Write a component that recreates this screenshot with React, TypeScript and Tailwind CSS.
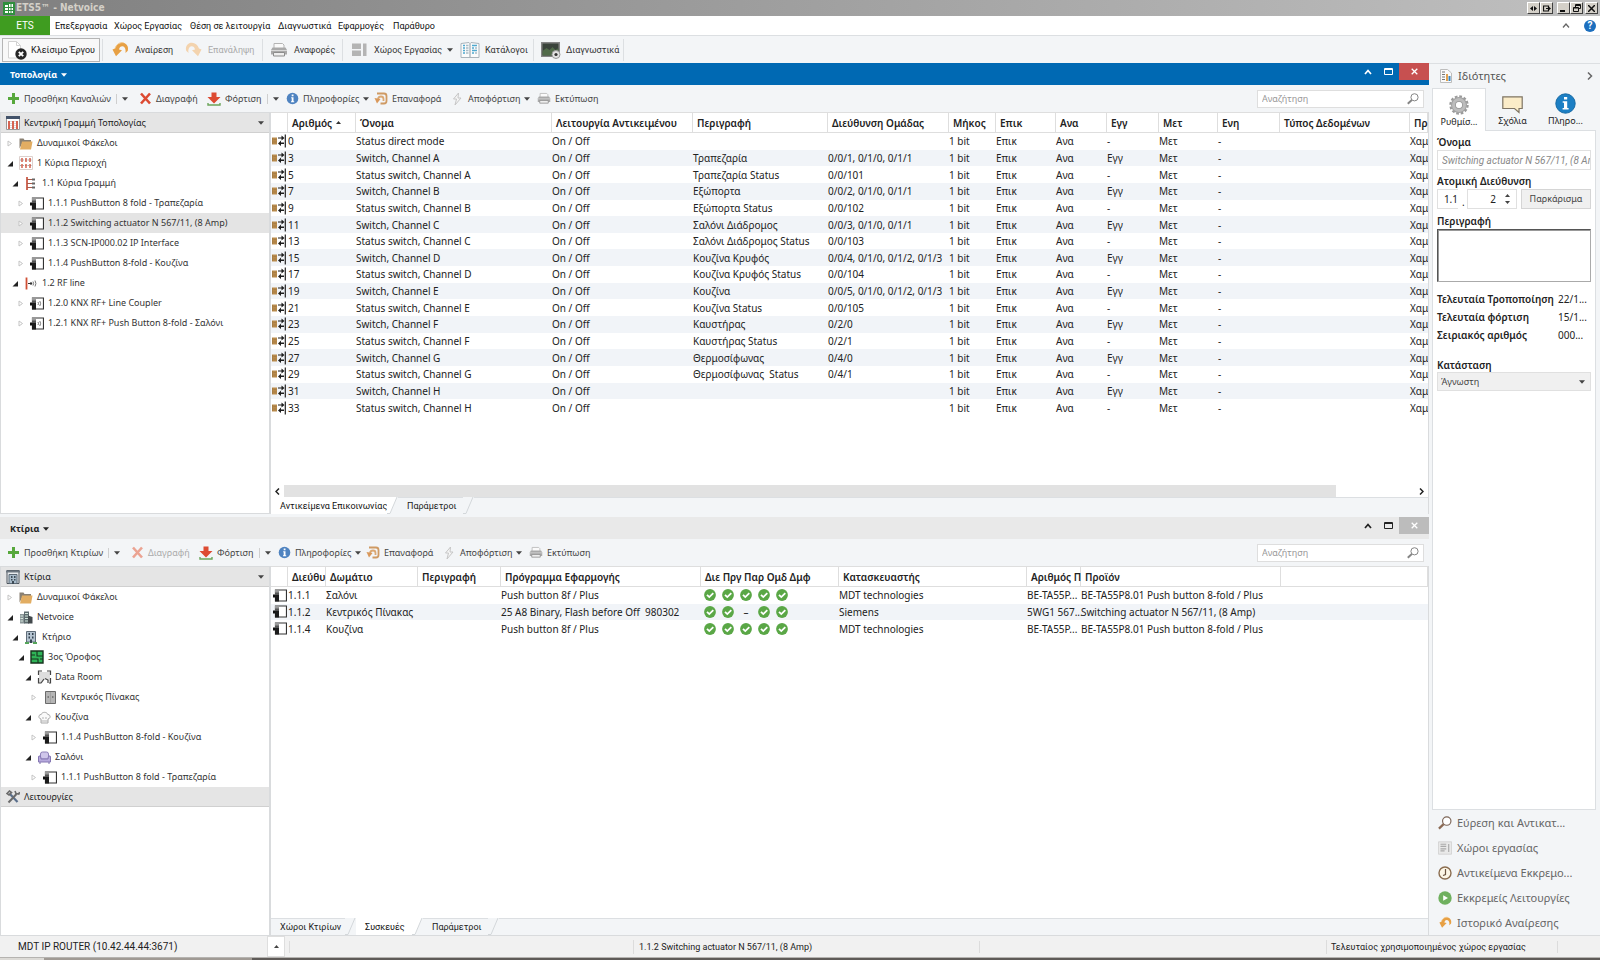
import React, { ReactNode } from "react";

/* ---------- icons ---------- */

type IconProps = { faded?: boolean };

const Down = ({ className = "text-[#444]" }: { className?: string }) => (
  <svg className={`shrink-0 ${className}`} width="6" height="4" viewBox="0 0 7 4" aria-hidden="true">
    <path d="M0 0h7L3.5 4z" fill="currentColor" />
  </svg>
);

const PlusIcon = () => (
  <svg width="13" height="13" viewBox="0 0 13 13" aria-hidden="true">
    <path d="M5 1h3v4h4v3H8v4H5V8H1V5h4z" fill="#57a83c" />
  </svg>
);

const CrossIcon = ({ faded }: IconProps) => (
  <svg width="13" height="13" viewBox="0 0 13 13" aria-hidden="true">
    <path d="M2 1.500l9 10M11 1.500l-9 10" stroke={faded ? "#eba392" : "#dc4a32"} strokeWidth="2.600" />
  </svg>
);

const DownloadIcon = () => (
  <svg width="14" height="14" viewBox="0 0 14 14" aria-hidden="true">
    <path d="M4.500 0.500h5v4.500h4L7 11.500 .5 5h4z" fill="#dd4b32" />
    <path d="M1 11v2h12v-2" fill="none" stroke="#6ba55a" strokeWidth="1.400" />
  </svg>
);

const InfoIcon = () => (
  <svg width="13" height="13" viewBox="0 0 13 13" aria-hidden="true">
    <circle cx="6.500" cy="6.500" r="5.800" fill="#4f83c0" />
    <path d="M5.700 2.500h1.800v1.700H5.700zM5.200 5.200h2.300v4h.7v1H5v-1h.7v-3h-.5z" fill="#fff" />
  </svg>
);

const RestoreIcon = () => (
  <svg width="14" height="13" viewBox="0 0 14 13" aria-hidden="true">
    <path d="M3 1.500h7q2.500 0 2.500 2.500v5q0 2.500-2.500 2.500H6.500" fill="none" stroke="#cf9a63" strokeWidth="1.800" />
    <path d="M9.500 9V7Q9.500 4.500 7 4.500 4.500 4.500 4 7" fill="none" stroke="#dba873" strokeWidth="1.800" />
    <path d="M.5 6l6 1L3 11.500z" fill="#d9985a" />
  </svg>
);

const BoltIcon = () => (
  <svg width="11" height="14" viewBox="0 0 11 14" aria-hidden="true">
    <path d="M6.500 1L1.500 7h3L3 13l6-7H6z" fill="#f5f5f5" stroke="#c6c6c6" strokeWidth="1" />
  </svg>
);

const PrinterIcon = ({ big }: { big?: boolean }) => (
  <svg width={big ? 18 : 14} height={big ? 16 : 13} viewBox="0 0 18 16" aria-hidden="true">
    <path d="M4 6V1.500h8.500L14 3v3" fill="#fafafa" stroke="#b4b4b4" />
    <path d="M2.500 5.500h13L17 8v4.500H1V8z" fill="#a9a9a9" />
    <path d="M1 8.500h16" stroke="#d8d8d8" />
    <path d="M3.500 10.500h11v3.500h-11z" fill="#eee" stroke="#8c8c8c" />
  </svg>
);

const CloseProjectIcon = () => (
  <svg width="20" height="20" viewBox="0 0 20 20" className="shrink-0" aria-hidden="true">
    <path d="M1.500 1.500h8l4 4V18h-12z" fill="#fff" stroke="#d2d2d2" />
    <path d="M9.500 1.500v4h4" fill="none" stroke="#d2d2d2" />
    <circle cx="14" cy="14" r="5.700" fill="#272727" />
    <path d="M11.800 11.800l4.400 4.400M16.200 11.800l-4.400 4.400" stroke="#fff" strokeWidth="1.900" />
  </svg>
);

const UndoIcon = ({ small }: { small?: boolean }) => (
  <svg width={small ? 13 : 17} height={small ? 13 : 17} viewBox="0 0 17 17" aria-hidden="true">
    <path
      d="M0.500 8.500L3 7.500C4.500 3 8 1 11.500 1.800 15 2.800 16.800 6 15.800 9.800L13.500 12c.6-4-.8-6.500-3-6.700-1.800-.1-3 1-3.500 3.200l3 .8-6 6z"
      fill="#e7a044"
    />
    <path d="M3 7.500C4.500 3 8 1 11.500 1.800" fill="none" stroke="#f3c889" />
  </svg>
);

const RedoIcon = () => (
  <svg width="17" height="17" viewBox="0 0 17 17" aria-hidden="true">
    <path
      d="M16.500 8.500L14 7.500C12.500 3 9 1 5.500 1.800 2 2.800.2 6 1.200 9.800L3.500 12c-.6-4 .8-6.500 3-6.700 1.800-.1 3 1 3.500 3.200l-3 .8 6 6z"
      fill="#f3d3ae"
    />
  </svg>
);

const WorkspaceIcon = ({ small }: { small?: boolean }) => (
  <svg width={small ? 14 : 17} height={small ? 14 : 16} viewBox="0 0 17 16" aria-hidden="true">
    {small && <path d="M.5 .5h16v15H.5z" fill="#e9e9e9" stroke="#cfcfcf" />}
    {small ? (
      <path d="M3 3.500h7M3 6h7M3 9h7M3 11.500h5M13 3v10" stroke="#a9a9a9" strokeWidth="1.400" />
    ) : (
      <path d="M1 1.500h9v5.500H1zM1 8.500h9V14H1zM12 1.500h3.500V14H12z" fill="#b4b4b4" />
    )}
  </svg>
);

const BookIcon = () => (
  <svg width="20" height="18" viewBox="0 0 20 18" aria-hidden="true">
    <path d="M1 2.500L9 1.500l1 1 1-1 8 1V16.500H1z" fill="#fbfbfb" stroke="#aab4bb" />
    <path d="M10 2.500V16" stroke="#8f9ba3" />
    <path d="M3 4.500h2M3 7h2M3 9.500h2M3 12h2M12 4.500h5M12 7h2M12 9.500h5M12 12h2" stroke="#4fa9cf" strokeWidth="1.300" />
    <path d="M6 4.500h2.500M6 7h2.500M6 9.500h2.500M6 12h2.500M15 7h2M15 12h2" stroke="#a9bcc6" strokeWidth="1.300" />
  </svg>
);

const DiagnosticsIcon = () => (
  <svg width="20" height="18" viewBox="0 0 20 18" aria-hidden="true">
    <path d="M0 1h19v15H0z" fill="#858585" />
    <path d="M1.500 2.500h16v12h-16z" fill="#3a433b" />
    <path d="M1.500 10l4-3 3 2 3-3 3 3 3-2v7.500h-16z" fill="#516b4a" />
    <circle cx="15" cy="13.500" r="4" fill="#e3e3e3" stroke="#999" />
    <circle cx="15" cy="13.500" r="1.600" fill="#333" />
  </svg>
);

const FolderIcon = () => (
  <svg width="14" height="13" viewBox="0 0 14 13" aria-hidden="true">
    <path d="M0.500 11.500V1.500h4l1 1.500h6.500v2H4z" fill="#8a8072" />
    <path d="M3 4.500h10.500l-1.500 8H1z" fill="#e2ad62" />
  </svg>
);

const AreaIcon = () => (
  <svg width="14" height="14" viewBox="0 0 14 14" aria-hidden="true">
    <path d="M.5 .5h13v13H.5z" fill="#fff" stroke="#dcd0cd" />
    <path d="M1 4h12M1 9.500h12" stroke="#aaa" strokeDasharray="1.500 1" />
    <path d="M3 2v10M7 2v10M11 2v10" stroke="#cf4a35" strokeWidth="1.300" strokeDasharray="4 2" />
  </svg>
);

const BackboneIcon = () => (
  <svg width="14" height="14" viewBox="0 0 14 14" aria-hidden="true">
    <path d="M.5 .5h13v13H.5z" fill="#fff" stroke="#999" />
    <path d="M0 0h14v3H0z" fill="#43536a" />
    <path d="M3 5v8M7 5v8M11 5v8" stroke="#cf4a35" strokeWidth="1.700" />
    <path d="M5 5v8M9 5v8" stroke="#b7b7b7" strokeDasharray="1 1" />
  </svg>
);

const LineIcon = () => (
  <svg width="12" height="13" viewBox="0 0 12 13" aria-hidden="true">
    <path d="M2 0v13" stroke="#c6452f" strokeWidth="1.600" />
    <path d="M2 2.500h5M2 6.500h5M2 10.500h5" stroke="#a85a4a" />
    <path d="M7 1.500h3v2H7zM7 5.500h3v2H7zM7 9.500h3v2H7z" fill="#666" />
  </svg>
);

const RfLineIcon = () => (
  <svg width="12" height="13" viewBox="0 0 12 13" aria-hidden="true">
    <path d="M1.500 0.500v12" stroke="#d05035" strokeWidth="1.800" />
    <path d="M3 6.500h3" stroke="#333" />
    <circle cx="6" cy="6.500" r="1.200" fill="#333" />
    <path d="M8 4.500q1.200 2 0 4M10 3.500q1.800 3 0 6" fill="none" stroke="#777" />
  </svg>
);

const DeviceIcon = ({ rf }: { rf?: boolean }) => (
  <svg width="14" height="13" viewBox="0 0 14 13" aria-hidden="true">
    <path d="M2.500 1h11v11h-11z" fill="#fff" stroke="#333" strokeWidth="1.200" />
    <path d="M2 .5h4v4H2z" fill="#999" />
    <path d="M2 3.500h4v3H2z" fill="#555" />
    <path d="M2 6h4v6.500H2z" fill="#1b1b1b" />
    <path d="M0 5.500h2v3H0z" fill="#111" />
    {rf && <path d="M8 5q1 1.500 0 3M9.800 4q1.600 2.500 0 5" fill="none" stroke="#777" />}
  </svg>
);

const BuildingsIcon = () => (
  <svg width="14" height="14" viewBox="0 0 14 14" aria-hidden="true">
    <path d="M1 .5h12v13H1z" fill="#e8ebee" stroke="#4c545c" />
    <path d="M0 1.500h14" stroke="#6c7680" strokeWidth="2" />
    <path d="M3 4.500h8v9H3z" fill="#a9bccb" stroke="#5d6a76" />
    <path d="M5 6h1.500v2H5zM8 6h1.500v2H8zM5 9h1.500v1.500H5zM8 9h1.500v1.500H8zM6 11h2v3H6z" fill="#3d4a55" />
  </svg>
);

const ProjectIcon = () => (
  <svg width="14" height="13" viewBox="0 0 14 13" aria-hidden="true">
    <path d="M1 3h5v9.500H1z" fill="#8b9698" />
    <path d="M5 .5h5v12H5z" fill="#5d6b6e" />
    <path d="M9 4.500l4.500 1.500v6.500H9z" fill="#42494c" />
    <path d="M6 2.500h3M6 5h3M6 7.500h3M6 10h3M1.500 5h2.500M1.500 7.500h2.500M1.500 10h2.500" stroke="#d3e6dc" />
  </svg>
);

const HouseIcon = () => (
  <svg width="12" height="14" viewBox="0 0 12 14" aria-hidden="true">
    <path d="M1.500 1.500h9V12h-9z" fill="#b4c3d0" stroke="#5f6c78" />
    <path d="M3.500 3h1.500v2H3.500zM7 3h1.500v2H7zM3.500 6.500h1.500v2H3.500zM7 6.500h1.500v2H7zM5 9.500h2V13H5z" fill="#344350" />
    <path d="M0 13h4M8 13h4" stroke="#55a55a" strokeWidth="2" />
  </svg>
);

const FloorIcon = () => (
  <svg width="14" height="14" viewBox="0 0 14 14" aria-hidden="true">
    <path d="M1 1h12v12H1z" fill="#2fb457" stroke="#17331e" strokeWidth="1.400" />
    <path d="M1 5h4M7 1v5h6M1 9h7v4M10 9h3" fill="none" stroke="#17331e" strokeWidth="1.100" />
  </svg>
);

const RoomIcon = () => (
  <svg width="15" height="14" viewBox="0 0 15 14" aria-hidden="true">
    <path d="M2 2h11v10l-5-3-3 4H2z" fill="#dedede" />
    <path d="M5 1H1.500v4M1.500 8v5H4l3-4M10 1h3.500v4M13.500 8v5H12M8 8.500l3 1.500v3" fill="none" stroke="#444" strokeWidth="1.200" />
  </svg>
);

const CabinetIcon = () => (
  <svg width="11" height="13" viewBox="0 0 11 13" aria-hidden="true">
    <path d="M.5 .5h10v12H.5z" fill="#b5b5b5" stroke="#6b6b6b" />
    <path d="M5.500 1v11" stroke="#a2a2a2" />
    <path d="M2.500 6h1.500M7 6h1.500" stroke="#444" />
  </svg>
);

const KitchenIcon = () => (
  <svg width="13" height="13" viewBox="0 0 13 13" aria-hidden="true">
    <path d="M3 12V8C0 7.500.3 3.300 3.200 3.500 4 .6 9 .6 9.800 3.500 12.700 3.300 13 7.500 10 8v4z" fill="#fafafa" stroke="#a8a8a8" />
    <path d="M3 10h7M5 6v2M8 6v2" stroke="#b5b5b5" />
  </svg>
);

const SofaIcon = () => (
  <svg width="13" height="13" viewBox="0 0 13 13" aria-hidden="true">
    <path d="M2.500 8V3q0-2 2-2h4q2 0 2 2v5z" fill="#cfc6ea" stroke="#8d80b8" />
    <path d="M.5 6q0-1.500 1.500-1 1 .3 1 3h7q0-2.700 1-3 1.500-.5 1.500 1v5H.5z" fill="#b7aadd" stroke="#8577b3" />
    <path d="M2 11v2M11 11v2" stroke="#7b6eaa" />
  </svg>
);

const ToolsIcon = () => (
  <svg width="14" height="14" viewBox="0 0 14 14" aria-hidden="true">
    <path d="M3.500 3.500l8 8.500" stroke="#5a6f8c" strokeWidth="2.200" />
    <path d="M10.500 4l-8 8.500" stroke="#6a6a6a" strokeWidth="2" />
    <path d="M1 3.500l2.500-2.500 2 1.500L3 5zM9 1l1 2.500 2.800.5.800-2" fill="none" stroke="#6a6a6a" strokeWidth="1.600" />
  </svg>
);

const ObjectIcon = () => (
  <svg width="15" height="14" viewBox="0 0 15 14" aria-hidden="true">
    <path d="M1 3.500h5v7H1z" fill="#b98a4b" />
    <path d="M1.500 4v6M2.500 5.500h3M2.500 8h3" stroke="#a17a42" strokeWidth=".8" />
    <path d="M7 3.500h3.500v-2l3 2.500-3 2.500v-2H7zM13 8.500H10v-2L7 9.500l3 2.500v-2h3z" fill="#1d1d1d" />
    <path d="M14.300 .5v13" stroke="#222" strokeWidth="1.200" />
  </svg>
);

const CheckIcon = () => (
  <svg width="12" height="12" viewBox="0 0 12 12" role="img" aria-label="OK">
    <circle cx="6" cy="6" r="5.900" fill="#5aa746" />
    <path d="M3 5.800l2.300 2.300L9.300 4.200" fill="none" stroke="#fff" strokeWidth="1.800" />
  </svg>
);

const SearchIcon = ({ brown }: { brown?: boolean }) => (
  <svg width={brown ? 14 : 12} height={brown ? 14 : 12} viewBox="0 0 12 12" className="shrink-0" aria-hidden="true">
    <circle cx="7.500" cy="4.300" r="3.600" fill="#fff" stroke={brown ? "#7c6557" : "#858585"} />
    <path d="M4.800 7L.8 10.800" stroke={brown ? "#8b6a54" : "#858585"} strokeWidth="1.900" />
  </svg>
);

const GearIcon = () => (
  <svg width="20" height="20" viewBox="0 0 20 20" aria-hidden="true">
    <circle cx="10" cy="10" r="8.600" fill="none" stroke="#9a9a9a" strokeWidth="2.200" strokeDasharray="2.700 1.803" />
    <circle cx="10" cy="10" r="5.500" fill="none" stroke="#9f9f9f" strokeWidth="5" />
    <circle cx="10" cy="10" r="5.500" fill="none" stroke="#bdbdbd" strokeWidth="3" />
    <circle cx="10" cy="10" r="2.800" fill="#fff" />
  </svg>
);

const CommentIcon = () => (
  <svg width="21" height="20" viewBox="0 0 21 20" aria-hidden="true">
    <path d="M.8 2.800h19.400v11.700H17V18.500l-4.500-4H.8z" fill="#fbecc8" stroke="#7e7463" strokeWidth="1.200" />
  </svg>
);

const BigInfoIcon = () => (
  <svg width="21" height="21" viewBox="0 0 21 21" aria-hidden="true">
    <circle cx="10.500" cy="10.500" r="9.700" fill="#1c7fc4" stroke="#166aa5" />
    <path d="M9 4h3.200v2.600H9zM7.700 8.200h4.500v6.800h1.400v1.600H7.600V15H9V9.800H7.700z" fill="#fff" />
  </svg>
);

const PropertiesIcon = () => (
  <svg width="12" height="14" viewBox="0 0 12 14" aria-hidden="true">
    <path d="M.5 .5h7l4 3.500v9.500H.5z" fill="#fafafa" stroke="#bdbdbd" />
    <path d="M2 3h3M2 5.500h3M2 8h3M2 10.500h3" stroke="#777" />
    <path d="M6 5h2v7H6z" fill="#e0a04e" />
    <path d="M8.500 7h2v5h-2z" fill="#3a86c2" />
  </svg>
);

const ClockIcon = () => (
  <svg width="14" height="14" viewBox="0 0 14 14" aria-hidden="true">
    <circle cx="7" cy="7" r="6" fill="#fdf6e6" stroke="#8a6d50" strokeWidth="1.400" />
    <path d="M7.500 3v5.500L5 9.500" fill="none" stroke="#6b5440" strokeWidth="1.200" />
  </svg>
);

const PlayIcon = () => (
  <svg width="14" height="14" viewBox="0 0 14 14" aria-hidden="true">
    <circle cx="7" cy="7" r="6.700" fill="#6fb05e" />
    <path d="M5.200 4.200L10 7 5.200 9.800z" fill="#fff" />
  </svg>
);

const Check = ({ ok }: { ok: boolean }) => (
  <span className="flex w-3 justify-center leading-3">{ok ? <CheckIcon /> : <span>–</span>}</span>
);

/* ---------- data ---------- */

const objectColumns: [string, string][] = [
  ["", "w-[17px]"],
  ["Αριθμός", "w-[68px]"],
  ["Όνομα", "w-[196px]"],
  ["Λειτουργία Αντικειμένου", "w-[141px]"],
  ["Περιγραφή", "w-[135px]"],
  ["Διεύθυνση Ομάδας", "w-[121px]"],
  ["Μήκος", "w-[47px]"],
  ["Επικ", "w-[60px]"],
  ["Ανα", "w-[51px]"],
  ["Εγγ", "w-[52px]"],
  ["Μετ", "w-[59px]"],
  ["Ενη", "w-[62px]"],
  ["Τύπος Δεδομένων", "w-[130px]"],
  ["Πρ", ""],
];

const objectRows: [number, string, string, string][] = [
  [0, "Status direct mode", "", ""],
  [3, "Switch, Channel A", "Τραπεζαρία", "0/0/1, 0/1/0, 0/1/1"],
  [5, "Status switch, Channel A", "Τραπεζαρία Status", "0/0/101"],
  [7, "Switch, Channel B", "Εξώπορτα", "0/0/2, 0/1/0, 0/1/1"],
  [9, "Status switch, Channel B", "Εξώπορτα Status", "0/0/102"],
  [11, "Switch, Channel C", "Σαλόνι Διάδρομος", "0/0/3, 0/1/0, 0/1/1"],
  [13, "Status switch, Channel C", "Σαλόνι Διάδρομος Status", "0/0/103"],
  [15, "Switch, Channel D", "Κουζίνα Κρυφός", "0/0/4, 0/1/0, 0/1/2, 0/1/3"],
  [17, "Status switch, Channel D", "Κουζίνα Κρυφός Status", "0/0/104"],
  [19, "Switch, Channel E", "Κουζίνα", "0/0/5, 0/1/0, 0/1/2, 0/1/3"],
  [21, "Status switch, Channel E", "Κουζίνα Status", "0/0/105"],
  [23, "Switch, Channel F", "Καυστήρας", "0/2/0"],
  [25, "Status switch, Channel F", "Καυστήρας Status", "0/2/1"],
  [27, "Switch, Channel G", "Θερμοσίφωνας", "0/4/0"],
  [29, "Status switch, Channel G", "Θερμοσίφωνας  Status", "0/4/1"],
  [31, "Switch, Channel H", "", ""],
  [33, "Status switch, Channel H", "", ""],
];

const deviceColumns: [string, string][] = [
  ["", "w-[17px]"],
  ["Διεύθυ", "w-[38px]"],
  ["Δωμάτιο", "w-[92px]"],
  ["Περιγραφή", "w-[83px]"],
  ["Πρόγραμμα Εφαρμογής", "w-[200px]"],
  ["Διε Πργ Παρ Ομδ Δμφ", "w-[138px]"],
  ["Κατασκευαστής", "w-[188px]"],
  ["Αριθμός Π", "w-[54px]"],
  ["Προϊόν", "w-[200px]"],
  ["", ""],
];

const deviceRows = [
  { addr: "1.1.1", room: "Σαλόνι", app: "Push button 8f / Plus", par: true, maker: "MDT technologies", order: "BE-TA55P...", product: "BE-TA55P8.01 Push button 8-fold / Plus" },
  { addr: "1.1.2", room: "Κεντρικός Πίνακας", app: "25 A8 Binary, Flash before Off  980302", par: false, maker: "Siemens", order: "5WG1 567...", product: "Switching actuator N 567/11, (8 Amp)" },
  { addr: "1.1.4", room: "Κουζίνα", app: "Push button 8f / Plus", par: true, maker: "MDT technologies", order: "BE-TA55P...", product: "BE-TA55P8.01 Push button 8-fold / Plus" },
];

type Node = { pad: string; open: boolean; icon: ReactNode; label: string; selected?: boolean };

const L = ["pl-[6px]", "pl-[11px]", "pl-[17px]", "pl-[24px]", "pl-[30px]"];

const topologyTree: Node[] = [
  { pad: L[0], open: false, icon: <FolderIcon />, label: "Δυναμικοί Φάκελοι" },
  { pad: L[0], open: true, icon: <AreaIcon />, label: "1 Κύρια Περιοχή" },
  { pad: L[1], open: true, icon: <LineIcon />, label: "1.1 Κύρια Γραμμή" },
  { pad: L[2], open: false, icon: <DeviceIcon />, label: "1.1.1 PushButton 8 fold - Τραπεζαρία" },
  { pad: L[2], open: false, icon: <DeviceIcon />, label: "1.1.2 Switching actuator N 567/11, (8 Amp)", selected: true },
  { pad: L[2], open: false, icon: <DeviceIcon />, label: "1.1.3 SCN-IP000.02 IP Interface" },
  { pad: L[2], open: false, icon: <DeviceIcon />, label: "1.1.4 PushButton 8-fold - Κουζίνα" },
  { pad: L[1], open: true, icon: <RfLineIcon />, label: "1.2 RF line" },
  { pad: L[2], open: false, icon: <DeviceIcon rf />, label: "1.2.0 KNX RF+ Line Coupler" },
  { pad: L[2], open: false, icon: <DeviceIcon rf />, label: "1.2.1 KNX RF+ Push Button 8-fold - Σαλόνι" },
];

const buildingTree: Node[] = [
  { pad: L[0], open: false, icon: <FolderIcon />, label: "Δυναμικοί Φάκελοι" },
  { pad: L[0], open: true, icon: <ProjectIcon />, label: "Netvoice" },
  { pad: L[1], open: true, icon: <HouseIcon />, label: "Κτήριο" },
  { pad: L[2], open: true, icon: <FloorIcon />, label: "3ος Όροφος" },
  { pad: L[3], open: true, icon: <RoomIcon />, label: "Data Room" },
  { pad: L[4], open: false, icon: <CabinetIcon />, label: "Κεντρικός Πίνακας" },
  { pad: L[3], open: true, icon: <KitchenIcon />, label: "Κουζίνα" },
  { pad: L[4], open: false, icon: <DeviceIcon />, label: "1.1.4 PushButton 8-fold - Κουζίνα" },
  { pad: L[3], open: true, icon: <SofaIcon />, label: "Σαλόνι" },
  { pad: L[4], open: false, icon: <DeviceIcon />, label: "1.1.1 PushButton 8 fold - Τραπεζαρία" },
];

/* ---------- parts ---------- */

const Tree = ({ nodes }: { nodes: Node[] }) => (
  <ul>
    {nodes.map((n, i) => (
      <li key={i}>
        <button className={`flex h-5 w-full items-center whitespace-nowrap text-left ${n.pad} ${n.selected ? "bg-[#e4e4e4]" : ""}`}>
          <span className="w-[11px] shrink-0">
            <svg width="6" height="7" viewBox="0 0 6 7" aria-hidden="true">
              {n.open ? <path d="M6 1v5.500H.5z" fill="#222" /> : <path d="M1 1l3.500 2.500L1 6z" fill="#fff" stroke="#c4c4c4" />}
            </svg>
          </span>
          <span className="flex w-4 shrink-0 justify-center">{n.icon}</span>
          <span className="ml-[3px]">{n.label}</span>
        </button>
      </li>
    ))}
  </ul>
);

const TreeHead = ({ icon, label, arrow }: { icon: ReactNode; label: string; arrow?: boolean }) => (
  <button className="flex h-5 w-full shrink-0 items-center border-b border-[#d0d0d0] bg-[#e5e5e5] pl-1 pr-[5px] text-[#222]">
    <span className="flex w-4 justify-center">{icon}</span>
    <span className="ml-[3px] flex-1 text-left">{label}</span>
    {arrow && <Down />}
  </button>
);

const Sep = () => <span className="h-[10px] w-px bg-[#cfcfcf]" />;

const Tool = ({ width, icon, label, split, arrow, faded }: { width: string; icon: ReactNode; label: string; split?: boolean; arrow?: boolean; faded?: boolean }) => (
  <div className={`flex shrink-0 items-center whitespace-nowrap ${width}`}>
    <button className="flex items-center gap-1" disabled={faded}>
      <span className="flex w-[14px] shrink-0 justify-center">{icon}</span>
      <span className={faded ? "text-[#aaa]" : "text-[#444]"}>{label}</span>
      {arrow && <Down />}
    </button>
    {split && (
      <button className="ml-[5px] flex items-center gap-[5px]" aria-label="Περισσότερα">
        <Sep />
        <Down />
      </button>
    )}
  </div>
);

const PanelTools = ({ add, addWidth, faded, id }: { add: string; addWidth: string; faded?: boolean; id: string }) => (
  <div className="flex h-[27px] shrink-0 items-center bg-[#f3f5f7] pl-[6px] pr-[5px] text-[9px]">
    <Tool width={addWidth} icon={<PlusIcon />} label={add} split />
    <Tool width="w-[69px]" icon={<CrossIcon faded={faded} />} label="Διαγραφή" faded={faded} />
    <Tool width="w-[78px]" icon={<DownloadIcon />} label="Φόρτιση" split />
    <Tool width="w-[89px]" icon={<InfoIcon />} label="Πληροφορίες" arrow />
    <Tool width="w-[76px]" icon={<RestoreIcon />} label="Επαναφορά" />
    <Tool width="w-[87px]" icon={<BoltIcon />} label="Αποφόρτιση" arrow />
    <Tool width="w-[70px]" icon={<PrinterIcon />} label="Εκτύπωση" />
    <label htmlFor={id} className="ml-auto flex h-[18px] w-[167px] items-center border border-[#dedede] bg-white px-1">
      <input id={id} aria-label="Αναζήτηση" placeholder="Αναζήτηση" className="min-w-0 flex-1 bg-transparent outline-none placeholder:text-[#999]" />
      <SearchIcon />
    </label>
  </div>
);

const PanelHead = ({ title, active }: { title: string; active?: boolean }) => (
  <div className={`flex h-[22px] shrink-0 items-start pl-[10px] ${active ? "bg-[#0069b3] text-white" : "bg-[#e9e9e9] text-[#222]"}`}>
    <button className="flex h-full items-center gap-1 pt-px text-[9px] font-bold">
      {title}
      <Down className={active ? "text-white" : "text-[#222]"} />
    </button>
    <div className="ml-auto flex h-[17px]">
      <button aria-label="Σύμπτυξη" className="flex w-[21px] items-center justify-center">
        <svg width="8" height="6" viewBox="0 0 8 6"><path d="M1 5l3-3.500L7 5" fill="none" stroke="currentColor" strokeWidth="1.700" /></svg>
      </button>
      <button aria-label="Μεγιστοποίηση" className="flex w-[21px] items-center justify-center">
        <svg width="9" height="7" viewBox="0 0 9 7"><path d="M.5 .5h8v6h-8zM.5 1.500h8" fill="none" stroke="currentColor" /></svg>
      </button>
      <button aria-label="Κλείσιμο" className={`flex w-[30px] items-center justify-center text-white ${active ? "bg-[#c75050]" : "bg-[#bcbcbc]"}`}>
        <svg width="7" height="7" viewBox="0 0 7 7"><path d="M.7 .7l5.600 5.600M6.300 .7L.7 6.300" stroke="currentColor" strokeWidth="1.300" /></svg>
      </button>
    </div>
  </div>
);

const Tabs = ({ tabs, active }: { tabs: [string, string][]; active: number }) => (
  <div role="tablist" className="flex h-[17px] shrink-0 bg-[#f3f5f7] font-['Roboto','Noto_Sans',sans-serif] text-[9px]">
    {tabs.map(([t, width], i) => (
      <div key={t} className="flex">
        <button
          role="tab"
          aria-selected={i === active}
          className={`whitespace-nowrap pl-[9px] text-left ${width} ${i === active ? "bg-white text-[#111]" : "border-t border-[#dcdfe2] text-[#222]"}`}
        >
          {t}
        </button>
        <svg width="11" height="17" viewBox="0 0 11 17" aria-hidden="true">
          {i === active && <path d="M0 0h10L3 17H0z" fill="#fff" />}
          <path d="M10 0L3 16.500H0" fill="none" stroke="#d3d7da" />
        </svg>
      </div>
    ))}
    <div className="flex-1 border-t border-[#dcdfe2]" />
  </div>
);

const HeadRow = ({ columns }: { columns: [string, string][] }) => (
  <thead>
    <tr className="h-5">
      {columns.map(([label, width], i) => (
        <th key={i} scope="col" className={`border-b border-r border-[#dedede] p-0 text-left font-semibold text-[#222] ${width}`}>
          <span className="flex items-center gap-1 whitespace-nowrap pl-1">
            {label}
            {label === "Αριθμός" && <svg width="5" height="3" viewBox="0 0 5 3" aria-hidden="true"><path d="M0 3h5L2.500 0z" fill="#333" /></svg>}
          </span>
        </th>
      ))}
    </tr>
  </thead>
);

const MenuSep = () => <span className="h-[22px] w-px bg-[#dcdfe2]" />;

const MainTool = ({ width, icon, label, arrow, faded }: { width: string; icon: ReactNode; label: string; arrow?: boolean; faded?: boolean }) => (
  <button disabled={faded} className={`flex shrink-0 items-center gap-[5px] whitespace-nowrap ${width} ${faded ? "text-[#aaa]" : "text-[#333]"}`}>
    <span className="flex w-5 shrink-0 justify-center">{icon}</span>
    {label}
    {arrow && <Down />}
  </button>
);

const winButton = "flex h-3 w-[13px] items-center justify-center border border-b-[#404040] border-l-white border-r-[#404040] border-t-white bg-[#d4d0c8]";

const menus: [string, string][] = [
  ["Επεξεργασία", "w-[59px]"],
  ["Χώρος Εργασίας", "w-[76px]"],
  ["Θέση σε λειτουργία", "w-[88px]"],
  ["Διαγνωστικά", "w-[60px]"],
  ["Εφαρμογές", "w-[55px]"],
  ["Παράθυρο", "w-[50px]"],
];

const sideLinks: [ReactNode, string][] = [
  [<SearchIcon brown />, "Εύρεση και Αντικατ..."],
  [<WorkspaceIcon small />, "Χώροι εργασίας"],
  [<ClockIcon />, "Αντικείμενα Εκκρεμο..."],
  [<PlayIcon />, "Εκκρεμείς Λειτουργίες"],
  [<UndoIcon small />, "Ιστορικό Αναίρεσης"],
];

const cell = "whitespace-pre p-0";

export default function App() {
  return (
    <div className="flex h-screen min-h-[700px] flex-col overflow-hidden bg-[#f3f5f7] font-['Noto_Sans','Open_Sans',sans-serif] text-[10px] leading-[14px] text-[#333]">
      <header className="font-['Roboto','Noto_Sans',sans-serif]">
        <div className="flex h-4 items-center bg-linear-to-r from-[#808080] to-[#c0c0c0] pl-[3px] pr-[2px]">
          <svg width="12" height="13" viewBox="0 0 12 13" aria-hidden="true">
            <path d="M0 0h12v13H0z" fill="#2f8f3e" />
            <path d="M2 3h3v8H2zM6 2h4v9H6z" fill="#fff" />
            <path d="M2 5.500h8M2 8.500h8" stroke="#2f8f3e" />
            <path d="M8 2v9" stroke="#2f8f3e" />
          </svg>
          <h1 className="ml-px font-['DejaVu_Sans_Condensed','DejaVu_Sans',sans-serif] text-[10px] font-bold text-[#d4d0c8]">ETS5™ - Netvoice</h1>
          <div className="ml-auto flex">
            <button aria-label="Εναλλαγή" className={winButton}>
              <svg width="7" height="5" viewBox="0 0 7 5"><path d="M0 2.500L3 0v5zM7 2.500L4 0v5z" fill="#111" /></svg>
            </button>
            <button aria-label="Μετακίνηση" className={winButton}>
              <svg width="8" height="7" viewBox="0 0 8 7"><path d="M.5 1h5v5h-5zM3 3.500h4" fill="none" stroke="#111" strokeWidth="1.200" /><path d="M5.500 1.500L8 3.500 5.500 5.500z" fill="#111" /></svg>
            </button>
            <button aria-label="Ελαχιστοποίηση" className={`ml-1 ${winButton}`}>
              <svg width="7" height="7" viewBox="0 0 7 7"><path d="M0 6h5" stroke="#111" strokeWidth="2" /></svg>
            </button>
            <button aria-label="Επαναφορά παραθύρου" className={winButton}>
              <svg width="8" height="8" viewBox="0 0 8 8"><path d="M2.500 3V.5h5v4H6M2.500 1.500h5M.5 3.500h5v4h-5zM.5 4h5" fill="none" stroke="#111" /></svg>
            </button>
            <button aria-label="Κλείσιμο παραθύρου" className={`ml-[2px] ${winButton}`}>
              <svg width="7" height="7" viewBox="0 0 7 7"><path d="M0 0l7 7M7 0L0 7" stroke="#111" strokeWidth="1.500" /></svg>
            </button>
          </div>
        </div>
        <nav className="flex h-5 items-center border-b border-[#dcdfe2] bg-white pr-[4px]">
          <button className="mr-[5px] h-full w-[50px] bg-[#3f9c20] text-white">ETS</button>
          {menus.map(([label, width]) => (
            <button key={label} className={`whitespace-nowrap pt-px text-left text-[9px] text-[#111] ${width}`}>{label}</button>
          ))}
          <div className="ml-auto flex items-center gap-[14px]">
            <button aria-label="Σύμπτυξη κορδέλας">
              <svg width="8" height="5" viewBox="0 0 8 5"><path d="M1 4.500L4 1l3 3.500" fill="none" stroke="#666" strokeWidth="1.300" /></svg>
            </button>
            <button aria-label="Βοήθεια" className="size-3 rounded-full bg-[#1c6fbe] text-[10px] font-bold leading-3 text-white">?</button>
          </div>
        </nav>
        <div className="flex h-[27px] items-center">
          <button className="ml-[2px] flex h-[24px] w-[98px] items-center gap-1 whitespace-nowrap border border-[#b5b5b5] bg-[#f8f8f8] pl-1 text-[9px] text-[#222]">
            <CloseProjectIcon />
            Κλείσιμο Έργου
          </button>
          <div className="ml-[2px] flex items-center text-[9px]">
            <MenuSep />
            <MainTool width="ml-[7px] w-[73px]" icon={<UndoIcon />} label="Αναίρεση" />
            <MainTool width="w-[79px]" icon={<RedoIcon />} label="Επανάληψη" faded />
            <MenuSep />
            <MainTool width="ml-[6px] w-[73px]" icon={<PrinterIcon big />} label="Αναφορές" />
            <MenuSep />
            <MainTool width="ml-[6px] w-[111px]" icon={<WorkspaceIcon />} label="Χώρος Εργασίας" arrow />
            <MainTool width="w-[73px]" icon={<BookIcon />} label="Κατάλογοι" />
            <MenuSep />
            <MainTool width="ml-[7px] w-[82px]" icon={<DiagnosticsIcon />} label="Διαγνωστικά" />
            <MenuSep />
          </div>
        </div>
      </header>

      <div className="flex min-h-0 flex-1">
        <main className="grid min-w-0 flex-1 grid-rows-[451fr_418fr] gap-[3px]">
          <section className="flex min-h-0 min-w-0 flex-col">
            <PanelHead title="Τοπολογία" active />
            <PanelTools id="search-topology" add="Προσθήκη Καναλιών" addWidth="w-[132px]" />
            <div className="flex min-h-0 flex-1">
              <aside className="w-[271px] shrink-0 border-b border-l border-r-2 border-t border-[#d9dbdd] bg-white text-[9px]">
                <TreeHead icon={<BackboneIcon />} label="Κεντρική Γραμμή Τοπολογίας" arrow />
                <Tree nodes={topologyTree} />
              </aside>
              <div className="flex min-w-0 flex-1 flex-col border-r border-[#d9dbdd]">
                <div className="min-h-0 flex-1 overflow-hidden border-t border-[#dedede] bg-white">
                  <table className="h-[303px] w-full table-fixed border-separate border-spacing-0 text-[#222]">
                    <HeadRow columns={objectColumns} />
                    <tbody>
                      {objectRows.map(([n, name, desc, group], i) => {
                        const on = i % 2 === 1;
                        return (
                          <tr key={n} className={on ? "bg-[#f1f4f8]" : ""}>
                            <td className="p-0"><ObjectIcon /></td>
                            <td className={cell}>{n}</td>
                            <td className={cell}>{name}</td>
                            <td className={cell}>On / Off</td>
                            <td className={cell}>{desc}</td>
                            <td className={cell}>{group}</td>
                            <td className={cell}>1 bit</td>
                            <td className={cell}>Επικ</td>
                            <td className={cell}>Ανα</td>
                            <td className={cell}>{on ? "Εγγ" : "-"}</td>
                            <td className={cell}>Μετ</td>
                            <td className={cell}>-</td>
                            <td className={cell}></td>
                            <td className={cell}>Χαμ</td>
                          </tr>
                        );
                      })}
                    </tbody>
                  </table>
                </div>
                <div className="flex h-3 shrink-0 items-center bg-white px-1">
                  <svg width="5" height="7" viewBox="0 0 5 7" aria-hidden="true"><path d="M4 .5L1 3.500l3 3" fill="none" stroke="#222" strokeWidth="1.500" /></svg>
                  <div className="mx-1 h-full flex-1"><div className="h-full w-[93%] bg-[#e2e2e2]" /></div>
                  <svg width="5" height="7" viewBox="0 0 5 7" aria-hidden="true"><path d="M1 .5l3 3-3 3" fill="none" stroke="#222" strokeWidth="1.500" /></svg>
                </div>
                <Tabs tabs={[["Αντικείμενα Επικοινωνίας", "w-[116px]"], ["Παράμετροι", "w-[65px]"]]} active={0} />
              </div>
            </div>
          </section>

          <section className="flex min-h-0 min-w-0 flex-col">
            <PanelHead title="Κτίρια" />
            <PanelTools id="search-buildings" add="Προσθήκη Κτιρίων" addWidth="w-[124px]" faded />
            <div className="flex min-h-0 flex-1">
              <aside className="w-[271px] shrink-0 border-l border-r-2 border-t border-[#d9dbdd] bg-white text-[9px]">
                <TreeHead icon={<BuildingsIcon />} label="Κτίρια" arrow />
                <Tree nodes={buildingTree} />
                <TreeHead icon={<ToolsIcon />} label="Λειτουργίες" />
              </aside>
              <div className="flex min-w-0 flex-1 flex-col border-r border-[#d9dbdd]">
                <div className="min-h-0 flex-1 overflow-hidden border-t border-[#dedede] bg-white">
                  <table className="h-[70px] w-full table-fixed border-separate border-spacing-0 text-[#222]">
                    <HeadRow columns={deviceColumns} />
                    <tbody>
                      {deviceRows.map((d, i) => (
                        <tr key={d.addr} className={i % 2 ? "bg-[#f1f4f8]" : ""}>
                          <td className="p-0 pl-[2px]"><DeviceIcon /></td>
                          <td className={cell}>{d.addr}</td>
                          <td className={cell}>{d.room}</td>
                          <td className={cell}></td>
                          <td className={cell}>{d.app}</td>
                          <td className="p-0 pl-[3px]">
                            <div className="flex gap-[6px]">
                              <Check ok /><Check ok /><Check ok={d.par} /><Check ok /><Check ok />
                            </div>
                          </td>
                          <td className={cell}>{d.maker}</td>
                          <td className={cell}>{d.order}</td>
                          <td className={cell}>{d.product}</td>
                          <td className={cell}></td>
                        </tr>
                      ))}
                    </tbody>
                  </table>
                </div>
                <Tabs tabs={[["Χώροι Κτιρίων", "w-[74px]"], ["Συσκευές", "w-[56px]"], ["Παράμετροι", "w-[65px]"]]} active={1} />
              </div>
            </div>
          </section>
        </main>

        <aside className="flex w-[171px] shrink-0 flex-col border-t border-[#dcdfe2] pl-[3px] pr-1">
          <div className="flex h-6 items-center pl-[8px] pr-[3px] text-[11px] text-[#555]">
            <PropertiesIcon />
            <h2 className="ml-[6px] flex-1">Ιδιότητες</h2>
            <button aria-label="Απόκρυψη">
              <svg width="6" height="8" viewBox="0 0 6 8"><path d="M1 .5L4.500 4 1 7.500" fill="none" stroke="#666" strokeWidth="1.500" /></svg>
            </button>
          </div>
          <div role="tablist" className="flex h-[43px] shrink-0 text-[9px] text-[#222]">
            <button role="tab" aria-selected="true" className="-mb-px flex w-[54px] flex-col items-center justify-end border border-b-0 border-[#dcdfe2] bg-white pb-[3px]">
              <GearIcon />Ρυθμίσ...
            </button>
            <button role="tab" aria-selected="false" className="flex w-[53px] flex-col items-center justify-end border-b border-[#dcdfe2] pb-[2px]">
              <CommentIcon />Σχόλια
            </button>
            <button role="tab" aria-selected="false" className="flex w-[53px] flex-col items-center justify-end border-b border-[#dcdfe2] pb-[2px]">
              <BigInfoIcon />Πληρο...
            </button>
            <span className="flex-1 border-b border-[#dcdfe2]" />
          </div>
          <form className="flex min-h-0 flex-1 flex-col border border-t-0 border-[#dcdfe2] bg-white px-1 pt-1 text-[#222]">
            <label htmlFor="name" className="h-[14px] font-semibold">Όνομα</label>
            <input id="name" placeholder="Switching actuator N 567/11, (8 Am" className="mt-px h-5 w-full border border-[#e0e0e0] pl-1 font-['Roboto','Noto_Sans',sans-serif] italic outline-none placeholder:text-[#888]" />
            <label htmlFor="address" className="mt-1 h-[14px] font-semibold">Ατομική Διεύθυνση</label>
            <div className="mt-px flex h-5 items-center">
              <input aria-label="Γραμμή" defaultValue="1.1" className="h-5 w-[21px] border border-r-0 border-[#e0e0e0] text-right outline-none" />
              <span className="w-[9px] self-end pl-1">.</span>
              <div className="flex h-5 w-[50px] items-center border border-[#e0e0e0]">
                <input id="address" defaultValue="2" className="w-7 text-right outline-none" />
                <span className="ml-[9px] flex flex-col gap-1">
                  <button type="button" aria-label="Αύξηση"><svg className="block" width="5" height="3" viewBox="0 0 5 3"><path d="M0 3h5L2.500 0z" fill="#444" /></svg></button>
                  <button type="button" aria-label="Μείωση"><svg className="block" width="5" height="3" viewBox="0 0 5 3"><path d="M0 0h5L2.500 3z" fill="#444" /></svg></button>
                </span>
              </div>
              <button type="button" className="ml-[4px] h-5 flex-1 border border-[#d5d5d5] bg-[#f0f0f0] text-[9px] text-[#444]">Παρκάρισμα</button>
            </div>
            <label htmlFor="description" className="mt-[5px] h-[14px] font-semibold">Περιγραφή</label>
            <textarea id="description" className="mt-px block h-[53px] w-full resize-none border border-b-[#aaa] border-l-[#555] border-r-[#aaa] border-t-[#555] shadow-[inset_1px_1px_0_#999] outline-none" />
            <dl className="mt-[8px] grid grid-cols-[121px_1fr] leading-[18px]">
              <dt className="whitespace-nowrap font-semibold">Τελευταία Τροποποίηση</dt><dd>22/1...</dd>
              <dt className="whitespace-nowrap font-semibold">Τελευταία φόρτιση</dt><dd>15/1...</dd>
              <dt className="whitespace-nowrap font-semibold">Σειριακός αριθμός</dt><dd>000...</dd>
            </dl>
            <label htmlFor="state" className="mt-[14px] h-[14px] font-semibold">Κατάσταση</label>
            <div className="relative">
              <select id="state" className="block h-[19px] w-full appearance-none border border-[#e0e0e0] bg-[#f0f0f0] px-[3px] text-[9px] text-[#444]">
                <option>Άγνωστη</option>
              </select>
              <span className="pointer-events-none absolute right-[6px] top-[8px]"><Down /></span>
            </div>
          </form>
          <nav className="flex flex-col text-[11px] text-[#666]">
            {sideLinks.map(([icon, label]) => (
              <a key={label} href="#" className="flex h-[25px] items-center gap-[5px] whitespace-nowrap pl-[6px] leading-[18px]">
                <span className="flex w-[14px] shrink-0 justify-center">{icon}</span>
                {label}
              </a>
            ))}
          </nav>
        </aside>
      </div>

      <footer className="shrink-0 font-['Roboto','Noto_Sans',sans-serif]">
        <div className="flex h-[22px] items-center whitespace-nowrap border-t border-[#d9dbdd] bg-[#f1f1f1] text-[9px] text-[#222]">
          <span className="w-[267px] pl-[18px] text-[10px]">MDT IP ROUTER (10.42.44.44:3671)</span>
          <button aria-label="Επιλογή διεπαφής" className="flex h-full w-[18px] items-center justify-center border border-[#dedede] bg-white">
            <svg width="5" height="3" viewBox="0 0 5 3"><path d="M0 3h5L2.500 0z" fill="#444" /></svg>
          </button>
          <span className="ml-1 h-3 w-[344px] border-l border-[#dcdcdc]" />
          <span className="w-[346px] border-l border-[#dcdcdc] pl-[5px]">1.1.2 Switching actuator N 567/11, (8 Amp)</span>
          <span className="h-3 flex-1 border-l border-[#dcdcdc]" />
          <span className="w-[231px] border-l border-[#dcdcdc] pl-1">Τελευταίος χρησιμοποιημένος χώρος εργασίας</span>
          <span className="h-3 w-[43px] border-l border-[#dcdcdc]" />
        </div>
        <div className="flex h-[3px] border-t border-[#b5b3b0] bg-[#5f5b58]">
          <span className="w-11 bg-[#dcdad6]" />
          <span className="w-52 bg-[#a09a94]" />
        </div>
      </footer>
    </div>
  );
}
